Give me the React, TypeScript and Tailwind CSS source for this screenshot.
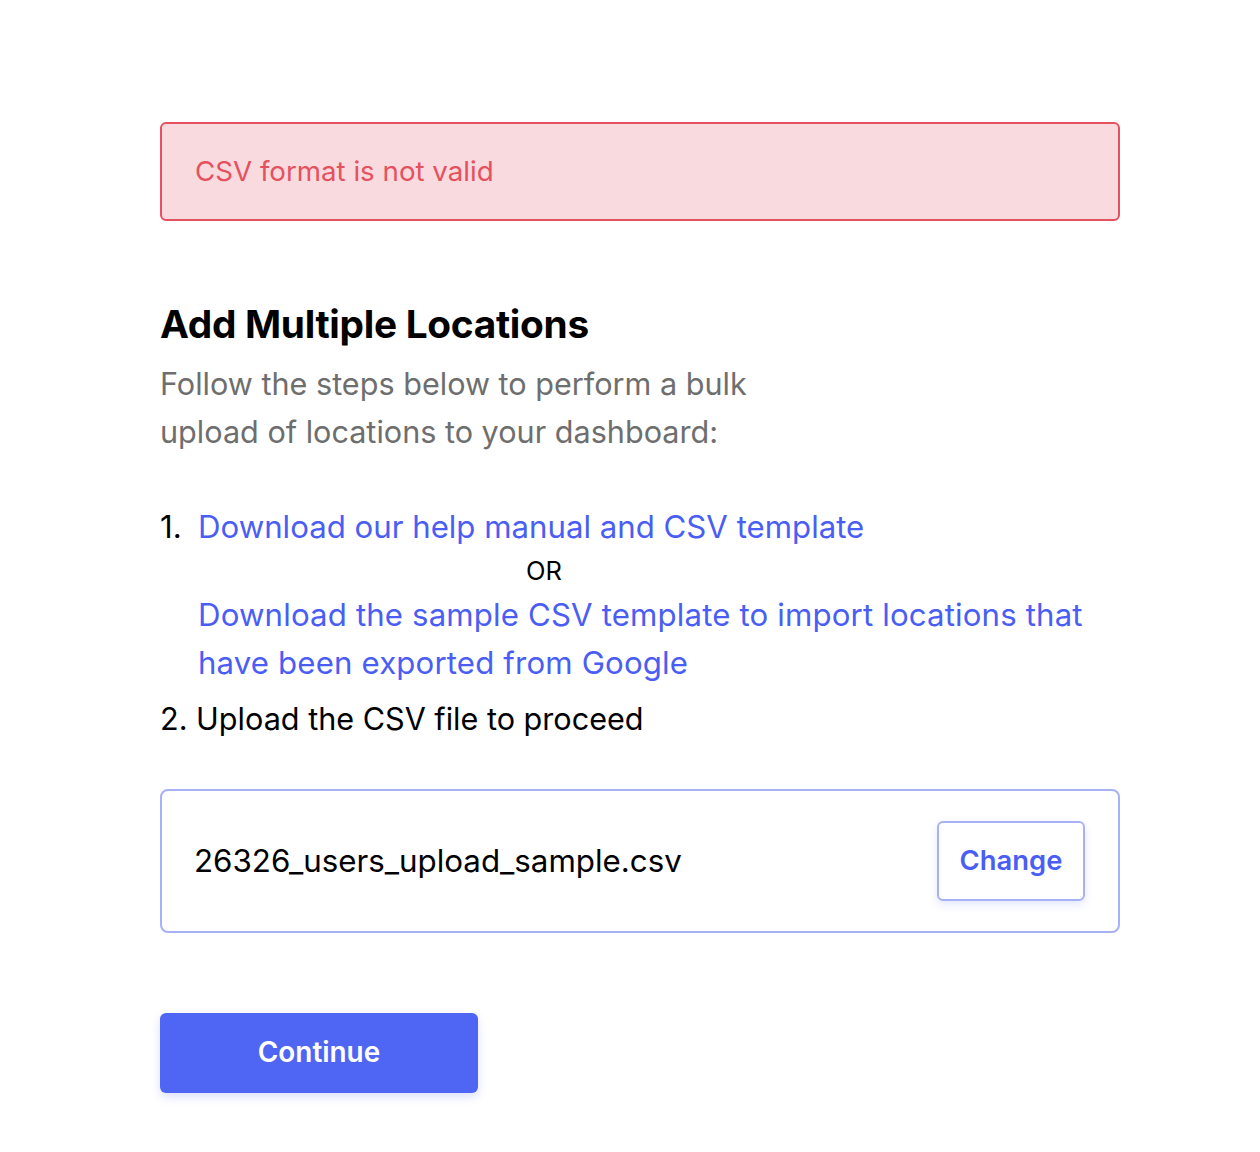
import React from "react";

export default function App() {
  return (
    <div className="min-h-[1152px] w-[1260px] bg-white" style={{ fontFamily: "Inter, 'Noto Sans', sans-serif" }}>
      <div className="ml-[160px] w-[960px] pt-[122px]">
        <div className="flex h-[99px] items-center rounded-md border-2 border-[#e5515e] bg-[#f8dadf] pl-[33px] text-[27.7px] text-[#e5515e]">
          CSV format is not valid
        </div>

        <h1 className="mt-[79px] text-[38.8px] font-bold leading-[48px] text-black tracking-[-0.3px]">Add Multiple Locations</h1>
        <p className="mt-[12px] w-[600px] text-[30.6px] leading-[48px] text-[#6e6e6e]">
          Follow the steps below to perform a bulk upload of locations to your dashboard:
        </p>

        <div className="mt-[47px] text-[31.2px] leading-[48px] text-black">
          <div className="flex">
            <span className="w-[38px] shrink-0">1.</span>
            <div>
              <a className="text-[#4a5ef5]">Download our help manual and CSV template</a>
            </div>
          </div>
          <div className="w-[768px] text-center text-[25.5px] leading-[40px]">OR</div>
          <div className="w-[938px] pl-[38px]">
            <a className="text-[#4a5ef5] tracking-[0.15px]">Download the sample CSV template to import locations that have been exported from Google</a>
          </div>
          <div className="mt-[8px] text-[30.6px]">2. Upload the CSV file to proceed</div>
        </div>

        <div className="mt-[46px] flex h-[144px] items-center justify-between rounded-lg border-2 border-[#a6b1f7] pl-[32px] pr-[33px]">
          <span className="text-[31.3px] text-black">26326_users_upload_sample.csv</span>
          <button className="flex h-[80px] w-[148px] items-center justify-center rounded-md border-2 border-[#a6b1f7] bg-white text-[27.4px] font-semibold text-[#4a5ef5] shadow-[0_4px_8px_rgba(80,102,245,0.15)]">
            Change
          </button>
        </div>

        <button className="mt-[80px] flex h-[80px] w-[318px] items-center justify-center rounded-md bg-[#4f66f5] text-[27.9px] font-semibold text-white shadow-[0_4px_10px_rgba(80,102,245,0.2)]">
          Continue
        </button>
      </div>
    </div>
  );
}
